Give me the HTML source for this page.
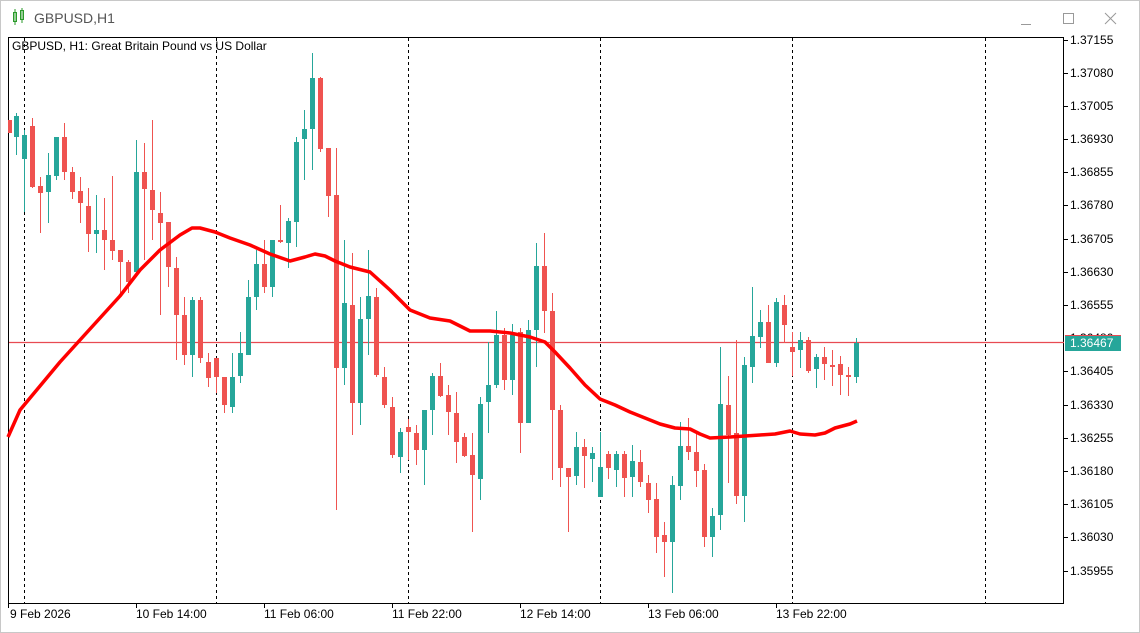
<!DOCTYPE html>
<html><head><meta charset="utf-8"><style>
html,body{margin:0;padding:0;width:1140px;height:633px;overflow:hidden;background:#fff;font-family:"Liberation Sans",sans-serif}
</style></head><body>
<svg width="1140" height="633" viewBox="0 0 1140 633" xmlns="http://www.w3.org/2000/svg" font-family="Liberation Sans, sans-serif">
<rect x="0" y="0" width="1140" height="633" fill="#fff"/>
<rect x="0.5" y="0.5" width="1139" height="632" fill="none" stroke="#c8c8c8"/>
<g fill="#3cb03c" stroke="#2a9a2a" stroke-width="1">
<rect x="13.5" y="12.5" width="3" height="9" fill="#fff" stroke="#2a9a2a"/><path d="M15 9V25" />
<rect x="20.5" y="10.5" width="3" height="9" fill="#fff"/><path d="M22 8V23"/>
</g>
<text x="34" y="23" font-size="14" fill="#555">GBPUSD,H1</text>
<g stroke="#999" stroke-width="1" fill="none">
<path d="M1021 24.5H1031"/>
<rect x="1063.5" y="13.5" width="10" height="10"/>
<path d="M1105 13L1116 24M1116 13L1105 24"/>
</g>
<rect x="8.5" y="37.5" width="1055" height="566" fill="#fff" stroke="#000"/>
<g stroke="#000" stroke-width="1" stroke-dasharray="3,3">
<path d="M24.5 38V603M216.5 38V603M408.5 38V603M600.5 38V603M792.5 38V603M985.5 38V603"/>
</g>
<path d="M9 342.5H1064" stroke="#e84a52" stroke-width="1.2"/>
<text x="12" y="50" font-size="12" fill="#000">GBPUSD, H1:  Great Britain Pound vs US Dollar</text>
<g fill="#ef5350" stroke="#ef5350">
<path fill="none" d="M8.5 120V133M32.5 118V188M40.5 177V233M64.5 123V180M72.5 167V199M80.5 177V223M88.5 188V252M104.5 198V270M112.5 176V260M120.5 250V297M128.5 260V293M144.5 143V260M152.5 120V240M160.5 192V315M168.5 222V287M176.5 257V360M184.5 297V365M200.5 297V363M208.5 353V387M216.5 358V393M224.5 377V413M264.5 240V293M280.5 205V243M320.5 77V152M328.5 148V217M336.5 148V510M352.5 253V435M376.5 288V377M384.5 367V408M392.5 397V458M408.5 419V460M416.5 425V465M440.5 363V397M448.5 385V435M456.5 392V463M464.5 433V457M472.5 433V532M504.5 328V390M520.5 328V453M544.5 233V333M552.5 293V480M560.5 405V487M568.5 468V532M584.5 439V488M608.5 451V479M624.5 451V497M640.5 450V487M648.5 475V513M656.5 483V553M664.5 522V577M688.5 418V460M696.5 433V487M704.5 464V547M728.5 376V483M736.5 340V504M768.5 305V363M784.5 295V343M792.5 332V376M808.5 337V373M824.5 347V380M832.5 350V386M840.5 356V395M848.5 367V396"/>
</g>
<g fill="#ef5350">
<rect x="9" y="120" width="3" height="13"/>
<rect x="30" y="126" width="5" height="61"/><rect x="38" y="186" width="5" height="7"/><rect x="62" y="137" width="5" height="35"/><rect x="70" y="172" width="5" height="20"/><rect x="78" y="191" width="5" height="12"/><rect x="86" y="206" width="5" height="28"/><rect x="102" y="230" width="5" height="10"/><rect x="110" y="240" width="5" height="11"/><rect x="118" y="250" width="5" height="12"/><rect x="126" y="262" width="5" height="20"/><rect x="142" y="172" width="5" height="17"/><rect x="150" y="190" width="5" height="20"/><rect x="158" y="213" width="5" height="10"/><rect x="166" y="222" width="5" height="45"/><rect x="174" y="268" width="5" height="47"/><rect x="182" y="315" width="5" height="40"/><rect x="198" y="300" width="5" height="58"/><rect x="206" y="362" width="5" height="16"/><rect x="214" y="358" width="5" height="19"/><rect x="222" y="377" width="5" height="28"/><rect x="262" y="264" width="5" height="23"/><rect x="278" y="240" width="5" height="2"/><rect x="318" y="78" width="5" height="71"/><rect x="326" y="148" width="5" height="48"/><rect x="334" y="195" width="5" height="173"/><rect x="350" y="305" width="5" height="98"/><rect x="374" y="297" width="5" height="78"/><rect x="382" y="377" width="5" height="28"/><rect x="390" y="407" width="5" height="48"/><rect x="406" y="427" width="5" height="5"/><rect x="414" y="433" width="5" height="17"/><rect x="438" y="376" width="5" height="20"/><rect x="446" y="395" width="5" height="17"/><rect x="454" y="413" width="5" height="29"/><rect x="462" y="437" width="5" height="19"/><rect x="470" y="455" width="5" height="20"/><rect x="502" y="335" width="5" height="45"/><rect x="518" y="332" width="5" height="91"/><rect x="542" y="266" width="5" height="45"/><rect x="550" y="311" width="5" height="99"/><rect x="558" y="410" width="5" height="58"/><rect x="566" y="468" width="5" height="9"/><rect x="582" y="447" width="5" height="9"/><rect x="606" y="454" width="5" height="14"/><rect x="622" y="454" width="5" height="24"/><rect x="638" y="462" width="5" height="20"/><rect x="646" y="483" width="5" height="17"/><rect x="654" y="499" width="5" height="38"/><rect x="662" y="535" width="5" height="7"/><rect x="686" y="446" width="5" height="6"/><rect x="694" y="452" width="5" height="19"/><rect x="702" y="470" width="5" height="67"/><rect x="726" y="405" width="5" height="30"/><rect x="734" y="433" width="5" height="63"/><rect x="766" y="322" width="5" height="41"/><rect x="782" y="305" width="5" height="20"/><rect x="790" y="347" width="5" height="5"/><rect x="806" y="340" width="5" height="31"/><rect x="822" y="357" width="5" height="7"/><rect x="830" y="365" width="5" height="2"/><rect x="838" y="364" width="5" height="11"/><rect x="846" y="375" width="5" height="2"/>
</g>
<g stroke="#26a69a" fill="none">
<path d="M16.5 113V155M24.5 130V212M48.5 153V223M56.5 137V180M96.5 195V253M136.5 140V277M192.5 297V377M232.5 353V413M240.5 332V383M248.5 280V355M256.5 250V310M272.5 240V297M288.5 218V268M296.5 137V247M304.5 110V180M312.5 53V170M344.5 240V385M360.5 297V425M368.5 250V355M400.5 428V473M424.5 410V485M432.5 373V435M480.5 397V500M488.5 342V433M496.5 311V388M512.5 324V395M528.5 320V423M536.5 243V367M576.5 432V485M592.5 447V482M600.5 432V497M616.5 451V487M632.5 445V497M672.5 476V593M680.5 422V500M712.5 508V557M720.5 347V530M744.5 357V522M752.5 287V383M760.5 310V348M776.5 298V367M800.5 332V368M816.5 354V388M856.5 338V383"/>
</g>
<g fill="#26a69a">
<rect x="14" y="116" width="5" height="21"/><rect x="22" y="135" width="5" height="24"/><rect x="46" y="175" width="5" height="17"/><rect x="54" y="137" width="5" height="39"/><rect x="94" y="230" width="5" height="4"/><rect x="134" y="172" width="5" height="100"/><rect x="190" y="300" width="5" height="55"/><rect x="230" y="377" width="5" height="30"/><rect x="238" y="353" width="5" height="23"/><rect x="246" y="297" width="5" height="58"/><rect x="254" y="264" width="5" height="33"/><rect x="270" y="240" width="5" height="47"/><rect x="286" y="221" width="5" height="22"/><rect x="294" y="142" width="5" height="80"/><rect x="302" y="129" width="5" height="10"/><rect x="310" y="78" width="5" height="51"/><rect x="342" y="303" width="5" height="65"/><rect x="358" y="319" width="5" height="84"/><rect x="366" y="296" width="5" height="23"/><rect x="398" y="432" width="5" height="25"/><rect x="422" y="410" width="5" height="40"/><rect x="430" y="376" width="5" height="34"/><rect x="478" y="404" width="5" height="75"/><rect x="486" y="385" width="5" height="17"/><rect x="494" y="335" width="5" height="50"/><rect x="510" y="335" width="5" height="45"/><rect x="526" y="330" width="5" height="93"/><rect x="534" y="266" width="5" height="64"/><rect x="574" y="447" width="5" height="29"/><rect x="590" y="453" width="5" height="6"/><rect x="598" y="467" width="5" height="30"/><rect x="614" y="454" width="5" height="16"/><rect x="630" y="461" width="5" height="16"/><rect x="670" y="485" width="5" height="57"/><rect x="678" y="446" width="5" height="40"/><rect x="710" y="516" width="5" height="21"/><rect x="718" y="404" width="5" height="111"/><rect x="742" y="365" width="5" height="131"/><rect x="750" y="336" width="5" height="31"/><rect x="758" y="322" width="5" height="15"/><rect x="774" y="302" width="5" height="61"/><rect x="798" y="340" width="5" height="10"/><rect x="814" y="357" width="5" height="12"/><rect x="854" y="343" width="5" height="34"/>
</g>
<path fill="none" stroke="#ff0000" stroke-width="3.5" stroke-linejoin="round" d="M8 437L20 410L30 398L45 380L60 362L80 340L100 318L120 296L140 270L160 250L180 235L192 228L200 228L215 232L230 238L250 245L270 254L290 261L305 257L315 254L325 256L335 261L350 267L370 272L390 290L410 310L430 318L450 321L470 331L490 331L510 333L530 337L545 342L555 352L570 368L585 385L600 399L615 405L630 412L645 418L660 424L675 428L690 429L700 434L710 438L730 437L760 435L775 434L790 431L800 434L815 435L825 433L835 428L850 424L857 421"/>
<g font-size="12" fill="#000">
<g stroke="#000"><path d="M1064 40.5h4M1064 73.5h4M1064 106.5h4M1064 139.5h4M1064 172.5h4M1064 205.5h4M1064 239.5h4M1064 272.5h4M1064 305.5h4M1064 371.5h4M1064 405.5h4M1064 438.5h4M1064 471.5h4M1064 504.5h4M1064 537.5h4M1064 571.5h4"/></g>
<text x="1070" y="44">1.37155</text><text x="1070" y="77">1.37080</text><text x="1070" y="110">1.37005</text><text x="1070" y="143">1.36930</text><text x="1070" y="176">1.36855</text><text x="1070" y="209">1.36780</text><text x="1070" y="243">1.36705</text><text x="1070" y="276">1.36630</text><text x="1070" y="309">1.36555</text><text x="1070" y="342">1.36480</text><text x="1070" y="375">1.36405</text><text x="1070" y="409">1.36330</text><text x="1070" y="442">1.36255</text><text x="1070" y="475">1.36180</text><text x="1070" y="508">1.36105</text><text x="1070" y="541">1.36030</text><text x="1070" y="575">1.35955</text>
</g>
<rect x="1065" y="335" width="56" height="16" fill="#26a69a"/>
<path d="M1065 335.5H1121" stroke="#e84a52"/>
<text x="1070" y="347" font-size="12" fill="#fff">1.36467</text>
<g stroke="#000"><path d="M8.5 603v5M136.5 603v5M264.5 603v5M392.5 603v5M520.5 603v5M648.5 603v5M776.5 603v5"/></g>
<g font-size="12" fill="#000">
<text x="10" y="618">9 Feb 2026</text><text x="136" y="618">10 Feb 14:00</text><text x="264" y="618">11 Feb 06:00</text><text x="392" y="618">11 Feb 22:00</text><text x="520" y="618">12 Feb 14:00</text><text x="648" y="618">13 Feb 06:00</text><text x="776" y="618">13 Feb 22:00</text>
</g>
</svg>
</body></html>
